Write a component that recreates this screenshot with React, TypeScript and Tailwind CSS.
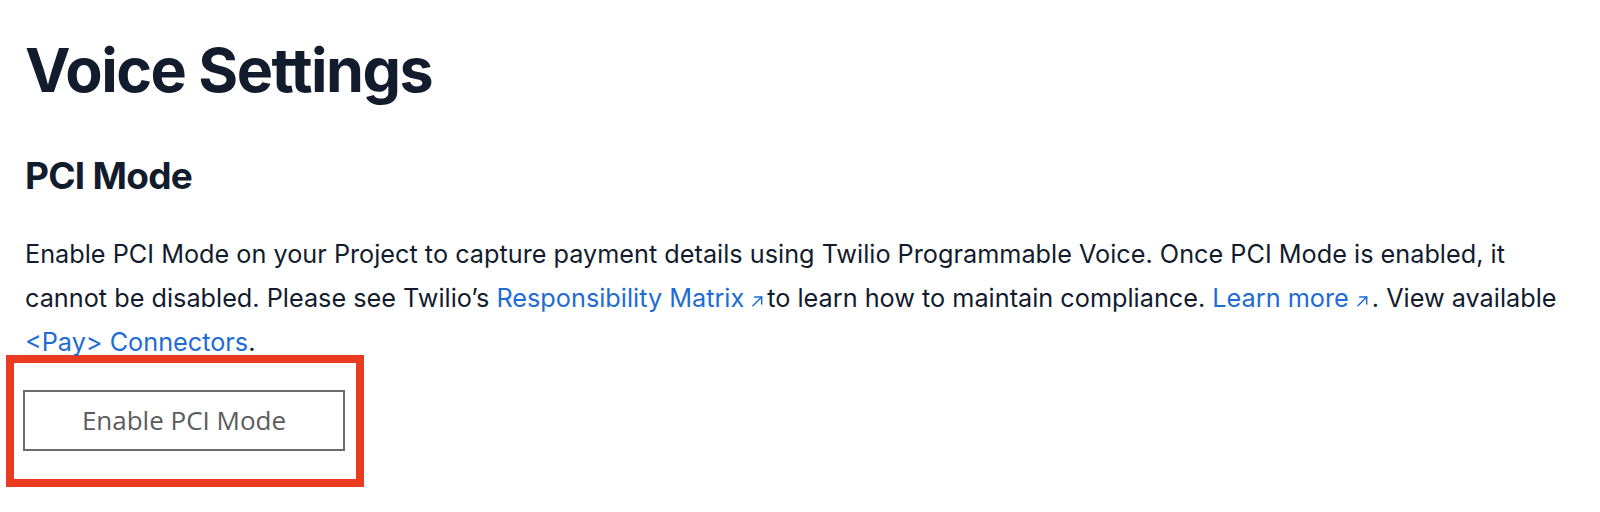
import React from 'react';

// Small "opens in new tab" arrow shown after external links
const ExternalArrow = () => (
    <svg
        viewBox="0 0 12 12"
        className="inline-block w-[14px] h-[14px] ml-[6px] mr-[3px] align-[-1px]"
        fill="none"
        stroke="currentColor"
        strokeWidth="1.3"
        strokeLinecap="round"
        strokeLinejoin="round"
    >
        <path d="M2.5 10 L10 2.5" />
        <path d="M4 2.5 H10 V8.5" />
    </svg>
);

const App = () => {
    return (
        <div className="min-h-screen bg-white pl-[25px] pr-[24px] pt-[40px] font-['Inter',sans-serif] text-[#121c2d]">
            <h1 className="text-[61px] leading-none font-bold tracking-[-0.025em]">
                Voice Settings
            </h1>

            <h2 className="mt-[56px] text-[37px] leading-none font-bold tracking-[-0.02em]">
                PCI Mode
            </h2>

            <p className="mt-[38px] text-[25.25px] leading-[44px]">
                Enable PCI Mode on your Project to capture payment details using Twilio Programmable Voice. Once PCI Mode is
                enabled, it cannot be disabled. Please see Twilio’s{' '}
                <a href="#" className="text-[#1e6bd6]">
                    Responsibility Matrix
                    <ExternalArrow />
                </a>
                to learn how to maintain compliance.{' '}
                <a href="#" className="text-[#1e6bd6]">
                    Learn more
                    <ExternalArrow />
                </a>
                . View available{' '}
                <a href="#" className="text-[#1e6bd6]">
                    &lt;Pay&gt; Connectors
                </a>
                .
            </p>

            <div className="-ml-[19px] -mt-[9px] w-[358px] h-[132px] border-[8px] border-[#e93b1f] pl-[9px] pt-[27px]">
                <button
                    type="button"
                    className="w-[322px] h-[61px] border-2 border-[#6b6b6b] bg-white text-[26px] text-[#5c5c5c] font-['Open_Sans',sans-serif]"
                >
                    Enable PCI Mode
                </button>
            </div>
        </div>
    );
};

export default App;
